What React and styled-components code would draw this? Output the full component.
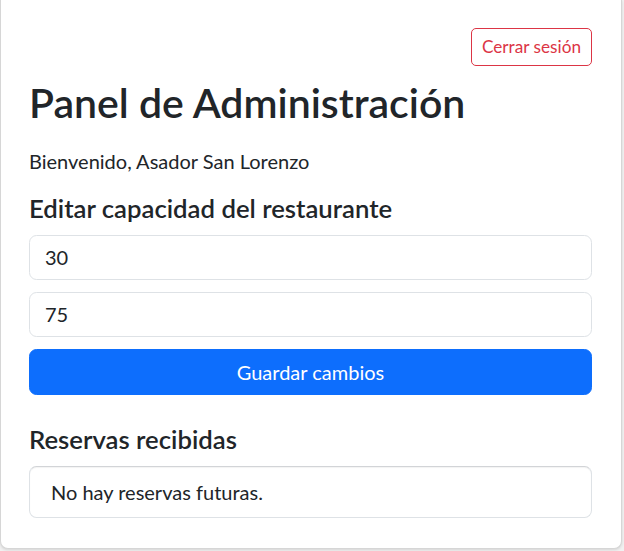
import React, { useState } from 'react';
import styled, { createGlobalStyle } from 'styled-components';

const GlobalStyle = createGlobalStyle`
  * {
    box-sizing: border-box;
  }

  body {
    margin: 0;
    background-color: #f1f1f1;
    font-family: Lato, "Noto Sans", sans-serif;
    font-size: 20px;
    line-height: 1.5;
    color: #212529;
  }
`;

const Page = styled.div`
  width: 624px;
  padding: 0 2px 2px 0;
`;

const AdminCard = styled.div`
  width: 622px;
  background-color: #fff;
  border: 1px solid #d6d6d6;
  border-top: none;
  border-radius: 0 0 8px 8px;
  box-shadow: 0 1px 3px rgba(0, 0, 0, 0.12);
  padding: 28px 29px 30px 28px;
`;

const TopBar = styled.div`
  display: flex;
  justify-content: flex-end;
  margin-bottom: 12px;
`;

const LogoutButton = styled.button`
  font-family: inherit;
  font-size: 17.2px;
  line-height: 1.5;
  color: #dc3545;
  background-color: #fff;
  border: 1px solid #dc3545;
  border-radius: 5px;
  padding: 5px 10px;
  cursor: pointer;
`;

const Title = styled.h1`
  margin: 0 0 19px;
  font-size: 41px;
  font-weight: 600;
  line-height: 1.2;
`;

const Welcome = styled.p`
  margin: 0 0 17px;
`;

const SectionTitle = styled.h4`
  margin: ${(props) => (props.$spaced ? '29px' : '0')} 0 11px;
  font-size: 25.7px;
  font-weight: 600;
  line-height: 1.2;
`;

const CapacityInput = styled.input`
  display: block;
  width: 100%;
  height: 45px;
  margin-bottom: 12px;
  padding: 0 15px;
  font-family: inherit;
  font-size: 20px;
  color: #212529;
  background-color: #fff;
  border: 1px solid #dee2e6;
  border-radius: 7.5px;
  outline: none;
`;

const SaveButton = styled.button`
  display: block;
  width: 100%;
  height: 46px;
  font-family: inherit;
  font-size: 20px;
  color: #fff;
  background-color: #0d6efd;
  border: 1px solid #0d6efd;
  border-radius: 7.5px;
  cursor: pointer;
`;

const ReservationList = styled.ul`
  margin: 0;
  padding: 0;
  list-style: none;
`;

const ReservationItem = styled.li`
  height: 52px;
  padding: 10px 21px;
  border: 1px solid #dee2e6;
  border-top-color: #d2d4d7;
  border-radius: 7.5px;
  box-shadow: inset 0 1px 1px rgba(0, 0, 0, 0.05);
`;

const App = () => {
  const [capacity, setCapacity] = useState({ min: '30', max: '75' });
  const reservations = [];

  return (
    <Page>
      <GlobalStyle />
      <AdminCard>
        <TopBar>
          <LogoutButton>Cerrar sesión</LogoutButton>
        </TopBar>
        <Title>Panel de Administración</Title>
        <Welcome>Bienvenido, Asador San Lorenzo</Welcome>

        <SectionTitle>Editar capacidad del restaurante</SectionTitle>
        <CapacityInput
          type="number"
          value={capacity.min}
          onChange={(e) => setCapacity({ ...capacity, min: e.target.value })}
        />
        <CapacityInput
          type="number"
          value={capacity.max}
          onChange={(e) => setCapacity({ ...capacity, max: e.target.value })}
        />
        <SaveButton>Guardar cambios</SaveButton>

        <SectionTitle $spaced>Reservas recibidas</SectionTitle>
        <ReservationList>
          {reservations.length === 0 && (
            <ReservationItem>No hay reservas futuras.</ReservationItem>
          )}
        </ReservationList>
      </AdminCard>
    </Page>
  );
};

export default App;
